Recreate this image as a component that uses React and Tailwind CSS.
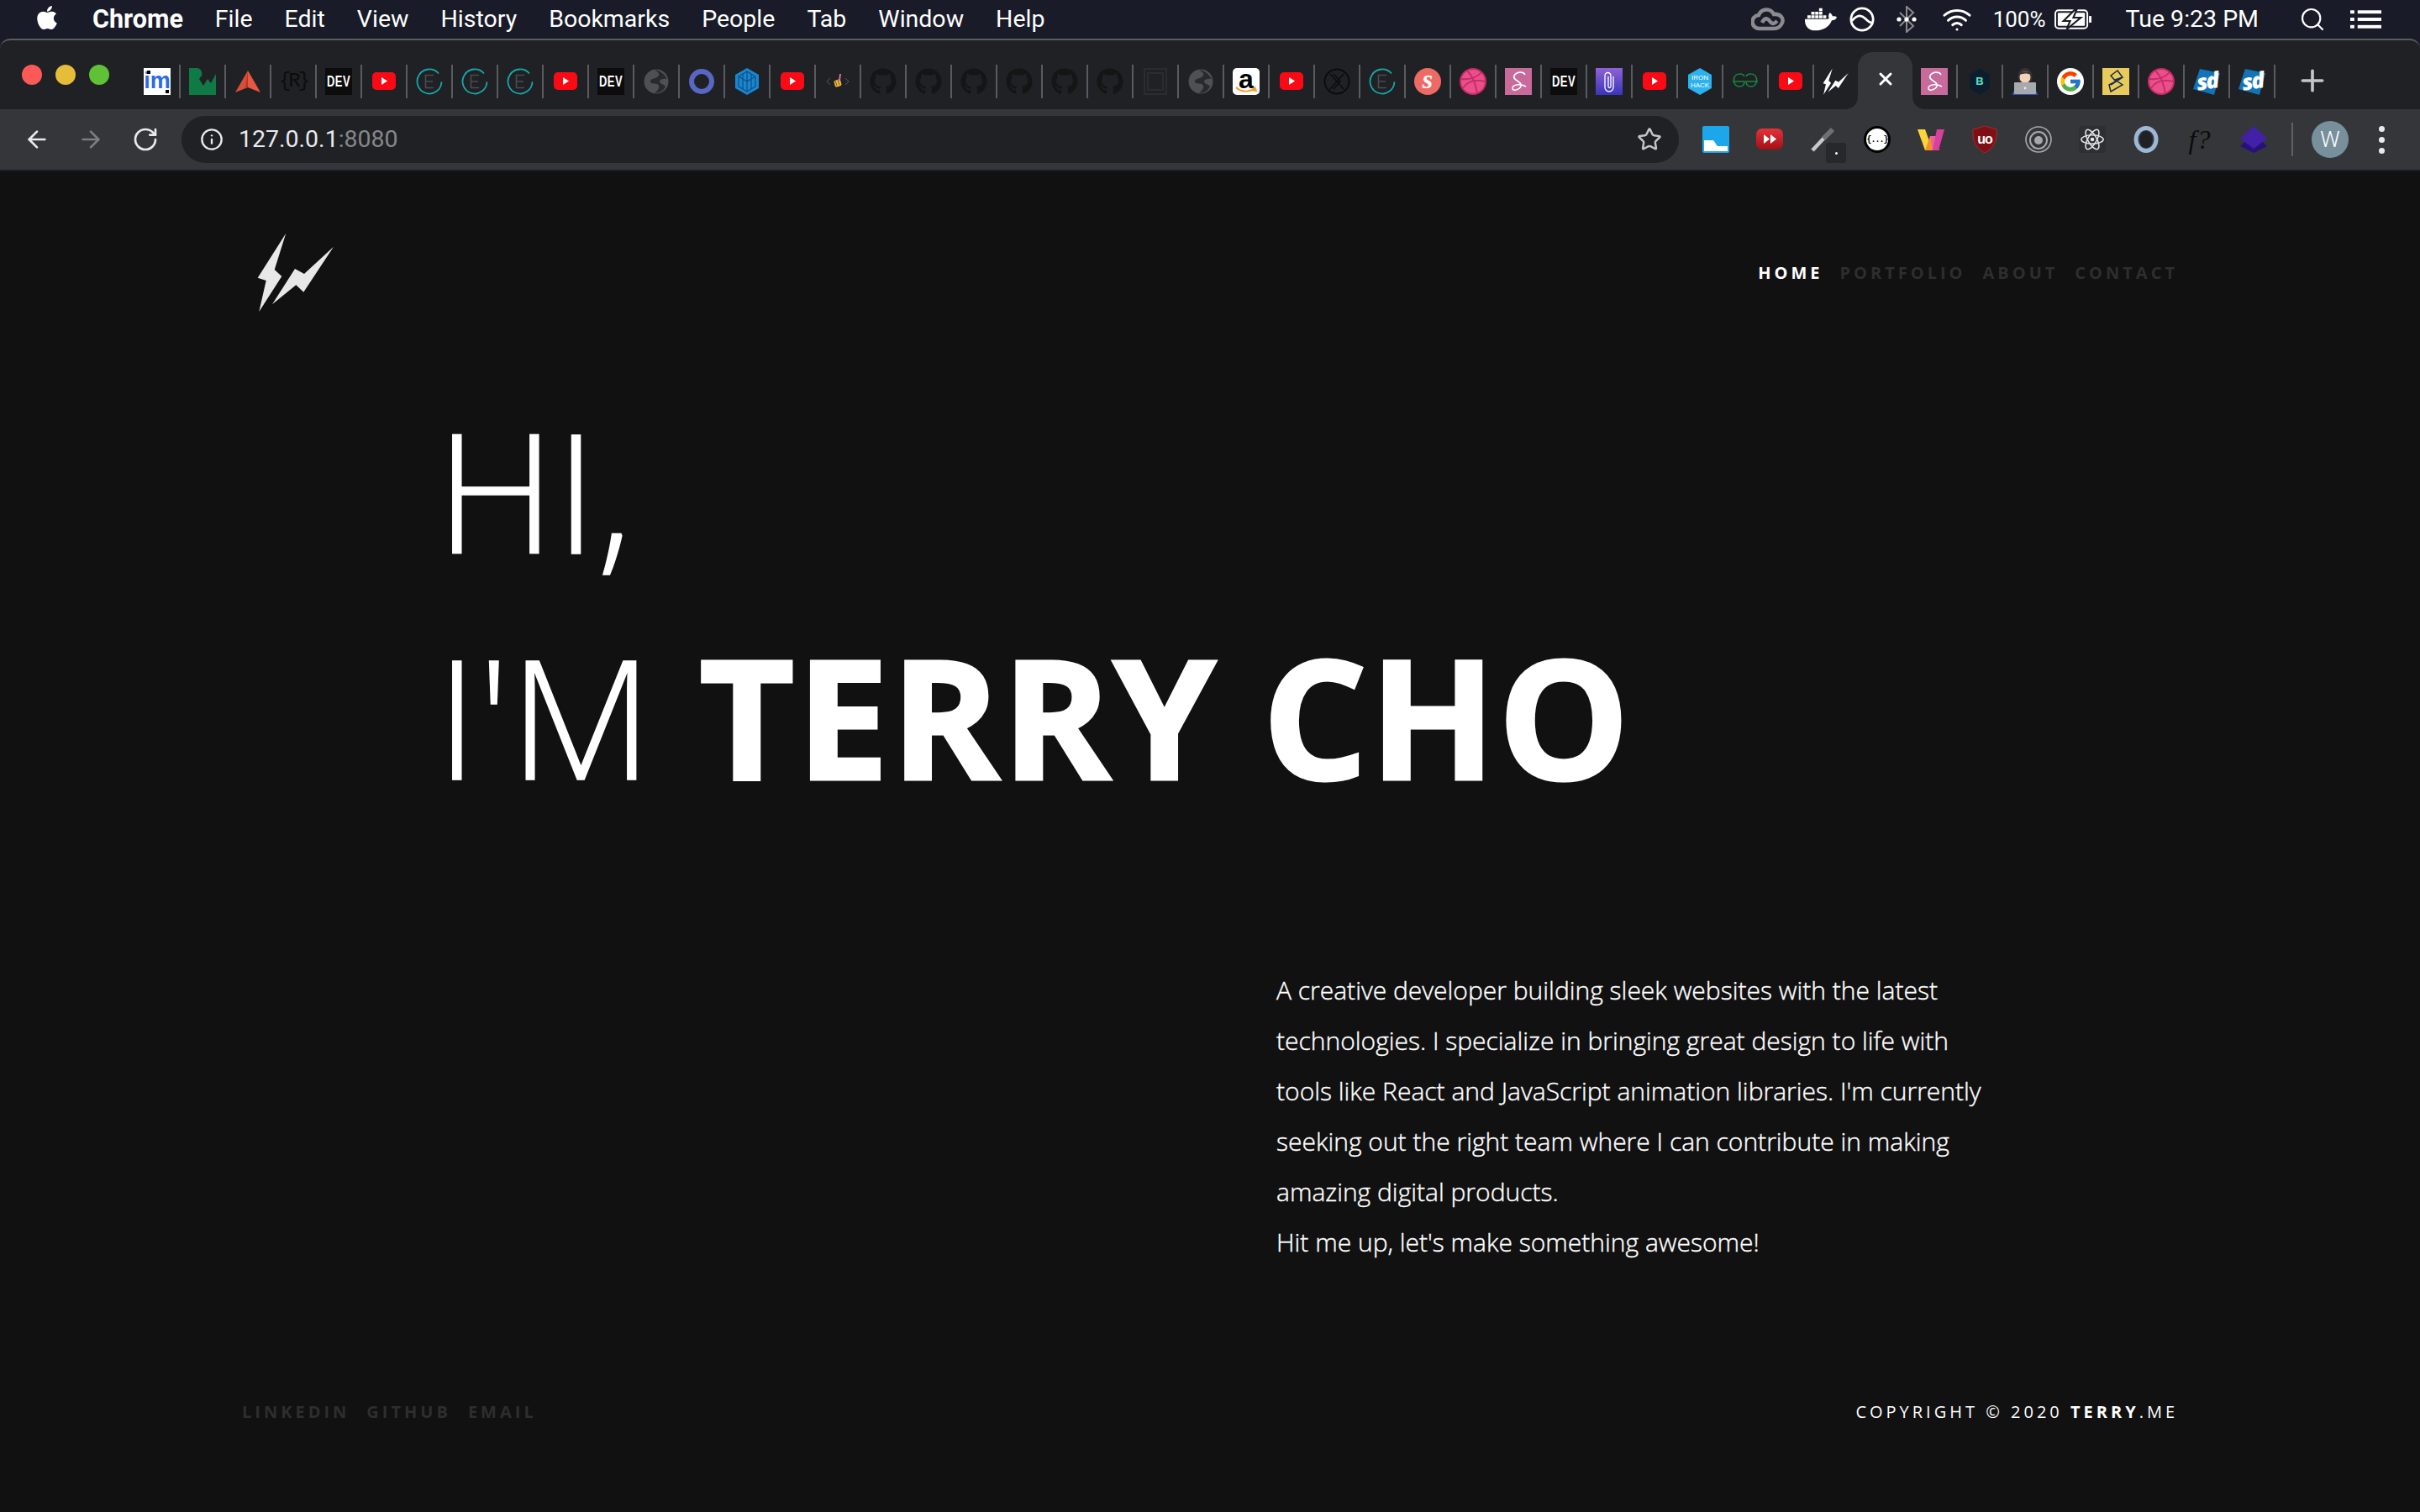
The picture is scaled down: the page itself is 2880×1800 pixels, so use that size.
import React from 'react';
import { FaApple, FaDocker, FaGithub } from 'react-icons/fa';
import { FcGoogle } from 'react-icons/fc';
import { ArrowLeft, ArrowRight, RotateCw, Info, Star, Search, Plus, X, Wifi } from 'lucide-react';

const openSans = "font-['Open_Sans',sans-serif]";

const Ico = ({ children, className = '' }) => (
  <svg viewBox="0 0 32 32" className={`w-[32px] h-[32px] ${className}`}>{children}</svg>
);

const Im = () => (
  <div className="w-[32px] h-[32px] bg-white relative flex items-center justify-center font-['Liberation_Sans',sans-serif] font-bold text-[27px] leading-none text-[#2b6be4]">
    <span className="-mt-[2px]">im</span>
    <span className="absolute left-[4px] top-[3px] w-[4px] h-[4px] bg-black" />
    <span className="absolute right-[2px] bottom-[2px] w-[4px] h-[4px] bg-black" />
  </div>
);
const Rw = () => (
  <Ico><path d="M0 0h10c5 1 6 6 5 9l-3 4 5 8 5-8 4 5 6-11v25H0z" fill="#0f7a45" /></Ico>
);
const Peak = () => (
  <Ico>
    <path d="M16 3L1 29l15-6z" fill="#d84e3a" />
    <path d="M16 3l15 26-15-6z" fill="#e8573f" />
    <path d="M16 3l-3 21 3-1z" fill="#ad3826" />
  </Ico>
);
const Rb = () => (
  <div className="w-[32px] h-[32px] flex items-center justify-center font-['Liberation_Mono',monospace] text-[24px] text-[#0c0c0c] tracking-[-3px]">{'{R}'}</div>
);
const Dev = () => (
  <div className="w-[32px] h-[32px] bg-[#0c0c0c] flex items-center justify-center overflow-hidden font-['Liberation_Sans',sans-serif] font-bold text-[13px] tracking-[.5px] text-white">
    <span className="scale-y-[1.45]">DEV</span>
  </div>
);
const Yt = () => (
  <Ico><rect x="2" y="5" width="28" height="21" rx="5" fill="#fb0a15" /><path d="M13 11l7 4.5-7 4.5z" fill="#fff" /></Ico>
);
const Eee = () => (
  <Ico>
    <path d="M30.5 16.5A14.5 14.5 0 1 1 27 6.5" fill="none" stroke="#17a9ab" strokeWidth="1.8" />
    <path d="M21 8.5h-9.5v15H21M11.5 16H20" fill="none" stroke="#4a4c4f" strokeWidth="1.6" />
  </Ico>
);
const Globe = () => (
  <Ico>
    <circle cx="16" cy="16" r="14.5" fill="#4d5055" />
    <path d="M14 2c4 3 7 5 4 8s-9 2-9 6 9 1 10 5-3 7-5 9c3-1 9 0 13-8-2-3-7-3-7-6s6-4 9-3C26 8 21 3 14 2z" fill="#292a2d" />
  </Ico>
);
const Ring = () => (
  <Ico><circle cx="16" cy="16" r="12" fill="none" stroke="#5867c4" strokeWidth="6" /></Ico>
);
const Cube = () => (
  <Ico>
    <path d="M16 0l14 8v16l-14 8-14-8V8z" fill="#1b86cf" />
    <path d="M16 4l10 6v12l-10 6-10-6V10zM16 4v24M6 10l10 6 10-6M11 7v18M21 7v18" fill="none" stroke="#0c4f82" strokeWidth="1.2" />
  </Ico>
);
const Hand = () => (
  <Ico>
    <path d="M7 12l-4 4 4 4M25 12l4 4-4 4" fill="none" stroke="#5a5a5a" strokeWidth="1" />
    <rect x="12" y="14" width="8" height="8" rx="2" fill="#e9b93c" transform="rotate(-15 16 18)" />
    <path d="M19 7l-1 8" stroke="#d96aa0" strokeWidth="2" />
    <path d="M13 15l2 6M16 14l2 6" stroke="#8a5a20" strokeWidth="1" />
  </Ico>
);
const Gh = () => <FaGithub className="w-[32px] h-[32px] text-[#151515]" />;
const Box = () => (
  <Ico>
    <rect x="3" y="1" width="26" height="30" fill="none" stroke="#2b2c2e" strokeWidth="2" />
    <rect x="7" y="6" width="18" height="20" fill="none" stroke="#2b2c2e" strokeWidth="2" />
  </Ico>
);
const Amazon = () => (
  <div className="w-[32px] h-[32px] rounded-[5px] bg-white relative flex justify-center font-['Liberation_Sans',sans-serif] font-bold text-[32px] leading-[26px] text-black">
    a
    <svg viewBox="0 0 32 10" className="absolute left-0 bottom-0 w-[32px] h-[10px]">
      <path d="M4 1c6 6 16 6 22 1M26 0l2 5-5-1" fill="none" stroke="#f39a1f" strokeWidth="1.8" />
    </svg>
  </div>
);
const Xc = () => (
  <Ico>
    <circle cx="16" cy="16" r="14.5" fill="none" stroke="#0b0b0b" strokeWidth="1.8" />
    <path d="M8 7l8 9-8 9M12 7l8 9-8 9M24 7l-8 9 8 9" fill="none" stroke="#0b0b0b" strokeWidth="1.3" />
  </Ico>
);
const Ascript = () => (
  <div className="w-[32px] h-[32px] rounded-full bg-[#ee6a64] flex items-center justify-center font-['Liberation_Serif',serif] italic font-bold text-[32px] leading-none text-white">
    <span className="-mt-[6px]">s</span>
  </div>
);
const Drib = () => (
  <Ico>
    <circle cx="16" cy="16" r="15" fill="#ea4f8c" stroke="#c42c66" strokeWidth="2" />
    <path d="M9 3c5 5 10 15 12 27M2 13c9 1 18-1 24-8M4 24c5-8 13-11 26-8" fill="none" stroke="#c42c66" strokeWidth="1.8" />
  </Ico>
);
const Sass = () => (
  <Ico>
    <rect width="32" height="32" fill="#c86a9b" />
    <path d="M24 8c-2-4-10-4-13 1-3 6 11 7 8 13-2 4-10 6-10 2 0-4 8-6 16-2" fill="none" stroke="#fff" strokeWidth="1.6" />
  </Ico>
);
const Clip = () => (
  <Ico>
    <defs>
      <linearGradient id="clipbg" x1="0" y1="0" x2="0" y2="1">
        <stop offset="0" stopColor="#8f62d6" />
        <stop offset="1" stopColor="#3a35b8" />
      </linearGradient>
    </defs>
    <rect width="32" height="32" fill="url(#clipbg)" />
    <path d="M21 10v13a5 5 0 0 1-10 0V9a3.5 3.5 0 0 1 7 0v13a1.5 1.5 0 0 1-3 0V10" fill="none" stroke="#fff" strokeWidth="1.3" />
  </Ico>
);
const Iron = () => (
  <div className="relative w-[32px] h-[32px]">
    <svg viewBox="0 0 32 32" className="absolute inset-0 w-[32px] h-[32px]"><path d="M16 0l14 8v16l-14 8-14-8V8z" fill="#2cb2ee" /></svg>
    <div className="absolute inset-0 flex flex-col items-center justify-center font-['Liberation_Sans',sans-serif] text-[8px] leading-[9px] text-white">
      <span>IRON</span><span>HACK</span>
    </div>
  </div>
);
const Gg = () => (
  <Ico>
    <path d="M15 10c-2-4-10-4-12 1-2 5 1 11 6 11s6-3 6-6H1M17 10c2-4 10-4 12 1 2 5-1 11-6 11s-6-3-6-6h14" fill="none" stroke="#18853f" strokeWidth="1.5" />
  </Ico>
);
const BoltMark = ({ className }) => (
  <svg viewBox="0 0 96 96" className={className}>
    <path d="M35.3 1.7L21.7 45l8.6 8L3.3 95l8.4-37-10-3.3z" fill="currentColor" />
    <path d="M92 17.7L57 50 46 44 19 86.3l28.3-23 9 8.4z" fill="currentColor" />
  </svg>
);
const Bolt = () => <BoltMark className="w-[32px] h-[32px] text-white" />;
const BHex = () => (
  <div className="relative w-[32px] h-[32px]">
    <svg viewBox="0 0 32 32" className="absolute inset-0 w-[32px] h-[32px]"><path d="M16 0l12 8v16l-12 8-12-8V8z" fill="#0c1e2e" /></svg>
    <div className="absolute inset-0 flex items-center justify-center font-['Liberation_Sans',sans-serif] font-bold text-[13px] text-[#5fe3c4]">B</div>
  </div>
);
const Person = () => (
  <Ico>
    <path d="M1 32c0-5 4-8 15-8s15 3 15 8z" fill="#3f4fae" />
    <path d="M8 14C6 5 11 0 16 0s10 5 8 14c-1 4-15 4-16 0z" fill="#3a3234" />
    <ellipse cx="16" cy="11" rx="6.5" ry="7" fill="#f3d3b8" />
    <path d="M9 8c3-5 11-5 14 0-4-2-9-2-14 0z" fill="#3a3234" />
    <rect x="3" y="17" width="26" height="14" rx="1" fill="#a8a9ad" />
    <circle cx="16" cy="24" r="1.4" fill="#ececec" />
  </Ico>
);
const Goog = () => (
  <div className="w-[32px] h-[32px] rounded-full bg-white flex items-center justify-center"><FcGoogle className="w-[28px] h-[28px]" /></div>
);
const Yell = () => (
  <Ico>
    <rect width="32" height="32" fill="#e8cb5a" />
    <path d="M18 3l6 8-9 3 9 6-14 8-2-8 8-4-6-7zM10 20l14-9" fill="none" stroke="#1d2b49" strokeWidth="1.5" />
  </Ico>
);
const Sd = () => (
  <div className="relative w-[32px] h-[32px]">
    <svg viewBox="0 0 32 32" className="absolute inset-0 w-[32px] h-[32px]"><path d="M8 1l24 5-7 26L0 25z" fill="#1273b6" /></svg>
    <div className="absolute inset-0 flex items-center justify-center font-['Open_Sans',sans-serif] italic font-extrabold text-[26px] leading-none tracking-[-2px] text-white">
      <span className="-mt-[3px] rotate-[-8deg]">sd</span>
    </div>
  </div>
);

// tabs left of the active one, then right of it
const leftTabs = [Im, Rw, Peak, Rb, Dev, Yt, Eee, Eee, Eee, Yt, Dev, Globe, Ring, Cube, Yt, Hand, Gh, Gh, Gh, Gh, Gh, Gh, Box, Globe, Amazon, Yt, Xc, Eee, Ascript, Drib, Sass, Dev, Clip, Yt, Iron, Gg, Yt, Bolt];
const rightTabs = [Sass, BHex, Person, Goog, Yell, Drib, Sd, Sd];

const Tab = ({ icon: Icon, last }) => (
  <div className={`h-[40px] shrink-0 flex items-center justify-center box-border ${last ? 'w-[52px]' : 'w-[54px] border-r-2 border-[#5a5b5f]'}`}>
    <Icon />
  </div>
);

const exts = [
  () => (
    <Ico>
      <rect x="0" y="0" width="32" height="32" rx="2" fill="#1ba7ea" />
      <path d="M2 17h10c3 0 4 7 7 7h11v6H2z" fill="#fff" />
    </Ico>
  ),
  () => (
    <Ico>
      <defs>
        <linearGradient id="ffred" x1="0" y1="0" x2="0" y2="1">
          <stop offset="0" stopColor="#e3323a" />
          <stop offset="1" stopColor="#a50f15" />
        </linearGradient>
      </defs>
      <rect x="0" y="3" width="32" height="25" rx="7" fill="url(#ffred)" />
      <path d="M9 10l7 5.5-7 5.5zM17 10l7 5.5-7 5.5z" fill="#fff" />
    </Ico>
  ),
  () => (
    <div className="relative w-[32px] h-[32px]">
      <svg viewBox="0 0 32 32" className="w-[32px] h-[32px]">
        <path d="M3 29l14-15" stroke="#c9c9c9" strokeWidth="4.5" />
        <path d="M16 15l11-11" stroke="#6f7074" strokeWidth="6" />
      </svg>
      <div className="absolute left-[19px] top-[20px] w-[24px] h-[24px] rounded-[3px] bg-[#27282b] flex items-center justify-center">
        <span className="w-[3px] h-[3px] rounded-full bg-white" />
      </div>
    </div>
  ),
  () => (
    <div className="w-[32px] h-[32px] rounded-full bg-white border-[3px] border-black flex items-center justify-center font-['Liberation_Mono',monospace] font-bold text-[10px] tracking-[-1px] text-black">{'{...}'}</div>
  ),
  () => (
    <Ico>
      <path d="M0 4h9l9 25H9z" fill="#fbd43c" />
      <path d="M15 12h7l-4 17H9z" fill="#f0912c" />
      <path d="M15 12h6l5 17h-8z" fill="#ee5fa0" />
      <path d="M23 4h9l-7 25h-7z" fill="#d93f9c" />
    </Ico>
  ),
  () => (
    <div className="relative w-[32px] h-[32px]">
      <svg viewBox="0 0 32 32" className="absolute inset-0 w-[32px] h-[32px]">
        <path d="M16 0l14 4c1 14-4 23-14 28C6 27 1 18 2 4z" fill="#7e1015" stroke="#a42a2e" strokeWidth="1" />
      </svg>
      <div className="absolute inset-0 flex items-center justify-center font-['Liberation_Sans',sans-serif] font-bold text-[16px] text-white tracking-[-1px]">uo</div>
    </div>
  ),
  () => (
    <Ico>
      <circle cx="16" cy="16" r="15" fill="none" stroke="#a8a8a8" strokeWidth="1.6" />
      <circle cx="16" cy="17" r="10" fill="none" stroke="#a8a8a8" strokeWidth="2" />
      <circle cx="16" cy="17" r="5" fill="#a8a8a8" />
    </Ico>
  ),
  () => (
    <div className="w-[32px] h-[32px] rounded-[3px] bg-[#2e2f33] flex items-center justify-center">
      <svg viewBox="0 0 32 32" className="w-[30px] h-[30px]" fill="none" stroke="#e6e6e6" strokeWidth="1.6">
        <ellipse cx="16" cy="16" rx="14" ry="5.5" />
        <ellipse cx="16" cy="16" rx="14" ry="5.5" transform="rotate(60 16 16)" />
        <ellipse cx="16" cy="16" rx="14" ry="5.5" transform="rotate(120 16 16)" />
        <circle cx="16" cy="16" r="2.5" fill="#e6e6e6" stroke="none" />
      </svg>
    </div>
  ),
  () => (
    <Ico>
      <ellipse cx="16" cy="16" rx="12" ry="13.5" fill="none" stroke="#9db8d6" strokeWidth="5" />
      <ellipse cx="16" cy="16" rx="7.5" ry="10" fill="#202124" />
    </Ico>
  ),
  () => (
    <div className="w-[32px] h-[32px] flex items-center justify-center font-['Liberation_Serif',serif] italic text-[32px] text-[#0c0c0c] tracking-[1px]">f?</div>
  ),
  () => (
    <Ico>
      <path d="M16 10l16 14-16 8L0 24z" fill="#25127a" />
      <path d="M16 0l16 15-16 12L0 15z" fill="#4220a8" />
    </Ico>
  ),
];

const MenuBar = () => (
  <div className="h-[46px] shrink-0 flex items-center justify-between text-white font-['Roboto',sans-serif] text-[28.5px] leading-none">
    <div className="flex items-center gap-[38px] pl-[41px]">
      <FaApple className="w-[30px] h-[32px] mr-[1px] -mt-[4px]" />
      <span className="font-bold text-[30.5px]">Chrome</span>
      {['File', 'Edit', 'View', 'History', 'Bookmarks', 'People', 'Tab', 'Window', 'Help'].map((m) => (
        <span key={m}>{m}</span>
      ))}
    </div>
    <div className="flex items-center pr-[46px]">
      <svg viewBox="0 0 40 28" className="w-[40px] h-[28px]" fill="none" stroke="#8a8b8e" strokeWidth="4.5">
        <path d="M10 25a8 8 0 0 1-1-16c3-8 14-9 18-1 8-1 12 5 10 10-2 5-6 7-10 7z" />
        <path d="M13 18c3-6 6-6 9-2s5 4 9 0" />
      </svg>
      <FaDocker className="w-[38px] h-[38px] ml-[24px]" />
      <svg viewBox="0 0 32 32" className="w-[30px] h-[30px] ml-[15px]" fill="none" stroke="#fff" strokeWidth="3">
        <circle cx="16" cy="16" r="14" />
        <path d="M3 18c7-8 12-8 17-3s7 6 9 5" />
      </svg>
      <svg viewBox="0 0 24 32" className="w-[24px] h-[32px] ml-[26px]" fill="none">
        <path d="M4 8l16 16-8 7V1l8 7L4 24" stroke="#8a8b8e" strokeWidth="2" />
        <circle cx="3" cy="16" r="2.6" fill="#fff" />
        <circle cx="12" cy="16" r="2.6" fill="#fff" />
        <circle cx="21" cy="16" r="2.6" fill="#fff" />
      </svg>
      <Wifi className="w-[44px] h-[36px] ml-[26px]" strokeWidth={2} />
      <span className="ml-[21px] text-[26px]">100%</span>
      <svg viewBox="0 0 46 24" className="w-[45px] h-[24px] ml-[10px]" fill="none" stroke="#fff" strokeWidth="2">
        <rect x="1" y="1" width="39" height="22" rx="4" />
        <rect x="4" y="4" width="33" height="16" rx="1" fill="#fff" stroke="none" />
        <path d="M43.5 8v8" strokeWidth="3" />
        <path d="M25 0L11 14h8l-4 10 17-14h-9l4-10z" fill="#fff" stroke="#191c28" strokeWidth="2.2" />
      </svg>
      <span className="ml-[40px]">Tue 9:23 PM</span>
      <Search className="w-[32px] h-[32px] ml-[48px]" strokeWidth={1.6} />
      <svg viewBox="0 0 38 22" className="w-[37px] h-[22px] ml-[29px]" fill="#fff">
        <rect x="0" y="0" width="5" height="4" /><rect x="9" y="0" width="29" height="4" />
        <rect x="0" y="9" width="5" height="4" /><rect x="9" y="9" width="29" height="4" />
        <rect x="0" y="18" width="5" height="4" /><rect x="9" y="18" width="29" height="4" />
      </svg>
    </div>
  </div>
);

const TabStrip = () => (
  <div className="h-[84px] shrink-0 flex box-border border-t-2 border-[#5b5c5e] rounded-t-[12px] bg-[#202124]">
    <div className="flex gap-[16px] pl-[26px] mt-[29px] w-[161px] shrink-0">
      <span className="w-[24px] h-[24px] rounded-full bg-[#fc5a56]" />
      <span className="w-[24px] h-[24px] rounded-full bg-[#e5bd38]" />
      <span className="w-[24px] h-[24px] rounded-full bg-[#5ec136]" />
    </div>
    <div className="flex mt-[29px]">
      {leftTabs.map((t, i) => <Tab key={i} icon={t} last={i === leftTabs.length - 1} />)}
    </div>
    <div className="relative mt-[14px] w-[65px] h-[68px] shrink-0 rounded-t-[18px] bg-[#35363a] flex items-center justify-center">
      <X className="w-[24px] h-[24px] text-white -mt-[4px]" strokeWidth={3} />
      <svg viewBox="0 0 16 16" className="absolute left-[-16px] bottom-0 w-[16px] h-[16px]"><path d="M16 0v16H0c10 0 16-6 16-16z" fill="#35363a" /></svg>
      <svg viewBox="0 0 16 16" className="absolute right-[-16px] bottom-0 w-[16px] h-[16px]"><path d="M0 0v16h16C6 16 0 10 0 0z" fill="#35363a" /></svg>
    </div>
    <div className="flex mt-[29px]">
      {rightTabs.map((t, i) => <Tab key={i} icon={t} />)}
    </div>
    <Plus className="w-[40px] h-[40px] text-[#c4c5c8] ml-[24px] mt-[28px]" strokeWidth={2.2} />
  </div>
);

const Toolbar = () => (
  <div className="h-[72px] shrink-0 flex items-center bg-[#35363a] pl-[28px]">
    <ArrowLeft className="w-[32px] h-[32px] text-[#e8eaed]" strokeWidth={2} />
    <ArrowRight className="w-[32px] h-[32px] text-[#7c7d80] ml-[32px]" strokeWidth={2} />
    <RotateCw className="w-[32px] h-[32px] text-[#e8eaed] ml-[33px]" strokeWidth={2} />
    <div className="ml-[27px] w-[1782px] h-[56px] rounded-full bg-[#202124] flex items-center pl-[22px] pr-[20px]">
      <Info className="w-[28px] h-[28px] text-[#e8eaed]" strokeWidth={2} />
      <span className="ml-[18px] font-['Roboto',sans-serif] text-[28.5px] text-[#e8eaed]">
        127.0.0.1<span className="text-[#85878a]">:8080</span>
      </span>
      <Star className="ml-auto w-[30px] h-[30px] text-[#c4c5c8]" strokeWidth={2} />
    </div>
    <div className="ml-[12px] flex">
      {exts.map((E, i) => (
        <div key={i} className="w-[64px] h-[40px] flex items-center justify-center"><E /></div>
      ))}
    </div>
    <div className="ml-[13px] w-[2px] h-[40px] bg-[#5f6063]" />
    <div className="ml-[22px] w-[44px] h-[44px] rounded-full bg-[#78909c] flex items-center justify-center font-['Roboto',sans-serif] font-light text-[26px] text-white">W</div>
    <div className="ml-[36px] flex flex-col gap-[6px]">
      <span className="w-[7px] h-[7px] rounded-full bg-[#e8eaed]" />
      <span className="w-[7px] h-[7px] rounded-full bg-[#e8eaed]" />
      <span className="w-[7px] h-[7px] rounded-full bg-[#e8eaed]" />
    </div>
  </div>
);

export default function App() {
  return (
    <div className={`w-[2880px] h-[1800px] overflow-hidden flex flex-col bg-[#191c28] ${openSans}`}>
      <MenuBar />
      <TabStrip />
      <Toolbar />
      <main className="flex-1 mt-[2px] bg-[#111111] text-white px-[288px] flex flex-col">
        <header className="h-[240px] shrink-0 flex items-center justify-between">
          <BoltMark className="ml-[17px] w-[96px] h-[96px] text-[#e8e8e8]" />
          <nav className="flex gap-[20px] pt-[2px] text-[20px] font-bold tracking-[4px] text-[#2e2e2e]">
            <a className="text-white">HOME</a>
            <a>PORTFOLIO</a>
            <a>ABOUT</a>
            <a>CONTACT</a>
          </nav>
        </header>
        <h1 className="mt-[4px] ml-[231px] text-[197px] leading-[269px] font-light whitespace-nowrap [-webkit-text-stroke:1.5px_#fff]">
          <div>HI,</div>
          <div>I'M <b className="ml-[4px] font-bold tracking-[2px] [-webkit-text-stroke:3px_#fff]">TERRY CHO</b></div>
        </h1>
        <div className="mt-[163px] ml-[1231px] w-[860px] text-[30px] leading-[60px] font-light [-webkit-text-stroke:0.4px_#fff]">
          <p>A creative developer building sleek websites with the latest technologies. I specialize in bringing great design to life with tools like React and JavaScript animation libraries. I'm currently seeking out the right team where I can contribute in making amazing digital products.</p>
          <p>Hit me up, let's make something awesome!</p>
        </div>
        <footer className="mt-auto pb-[107px] flex items-center justify-between text-[20px] leading-[24px] tracking-[4px]">
          <div className="flex gap-[20px] font-bold text-[#2e2e2e]">
            <a>LINKEDIN</a>
            <a>GITHUB</a>
            <a>EMAIL</a>
          </div>
          <div className="text-white">COPYRIGHT © 2020 <b className="font-bold">TERRY</b>.ME</div>
        </footer>
      </main>
    </div>
  );
}
